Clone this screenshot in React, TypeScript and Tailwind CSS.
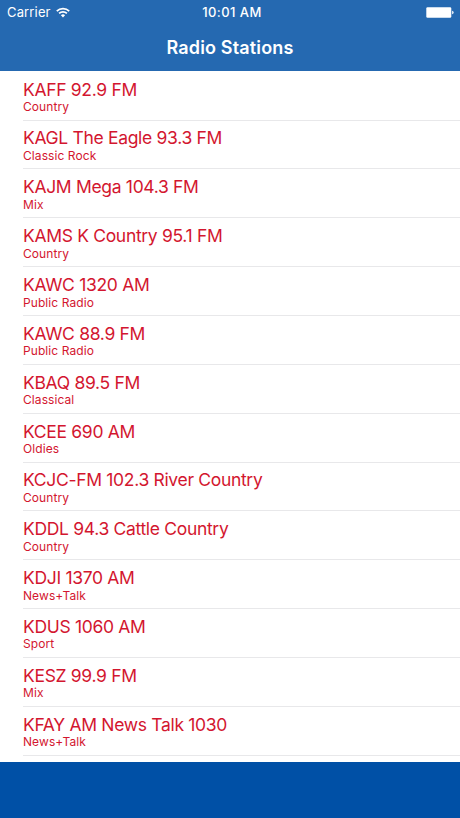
import React from 'react';

interface Station {
    name: string;
    genre: string;
}

const stations: Station[] = [
    { name: 'KAFF 92.9 FM', genre: 'Country' },
    { name: 'KAGL The Eagle 93.3 FM', genre: 'Classic Rock' },
    { name: 'KAJM Mega 104.3 FM', genre: 'Mix' },
    { name: 'KAMS K Country 95.1 FM', genre: 'Country' },
    { name: 'KAWC 1320 AM', genre: 'Public Radio' },
    { name: 'KAWC 88.9 FM', genre: 'Public Radio' },
    { name: 'KBAQ 89.5 FM', genre: 'Classical' },
    { name: 'KCEE 690 AM', genre: 'Oldies' },
    { name: 'KCJC-FM 102.3 River Country', genre: 'Country' },
    { name: 'KDDL 94.3 Cattle Country', genre: 'Country' },
    { name: 'KDJI 1370 AM', genre: 'News+Talk' },
    { name: 'KDUS 1060 AM', genre: 'Sport' },
    { name: 'KESZ 99.9 FM', genre: 'Mix' },
    { name: 'KFAY AM News Talk 1030', genre: 'News+Talk' },
];

const WifiIcon: React.FC = () => (
    <svg width="14" height="11" viewBox="0 0 14 11" fill="none" stroke="white" strokeWidth="1.7">
        <path d="M0.8 4.1a8.8 8.8 0 0 1 12.4 0" />
        <path d="M3.1 6.4a5.5 5.5 0 0 1 7.8 0" />
        <path d="M7 10.4L4.9 8.2a3 3 0 0 1 4.2 0z" fill="white" stroke="none" />
    </svg>
);

const BatteryIcon: React.FC = () => (
    <svg width="28" height="11" viewBox="0 0 28 11" fill="white">
        <rect x="0.3" y="0.2" width="25" height="10.6" rx="1.2" />
        <path d="M26.2 3.7c1.9 0.5 1.9 3.1 0 3.6z" />
    </svg>
);

const StatusBar: React.FC = () => (
    <div className="grid h-6 grid-cols-3 items-center pl-[7px] pr-[6px] text-[13px] leading-none">
        <div className="flex items-center gap-[5px]">
            <span className="tracking-[0.15px]">Carrier</span>
            <WifiIcon />
        </div>
        <span className="pl-[3px] text-center font-medium tracking-[0.45px]">10:01 AM</span>
        <div className="flex justify-end">
            <BatteryIcon />
        </div>
    </div>
);

const StationRow: React.FC<{ station: Station }> = ({ station }) => (
    <li className="h-[48.85px] pl-[23px]">
        <div className="flex h-full flex-col border-b border-[#e8e8ea] pt-[6.8px]">
            <span className="text-[17.5px] leading-[21.6px] tracking-[-0.32px]">{station.name}</span>
            <span className="text-[12px] leading-[14px] tracking-[0.08px]">{station.genre}</span>
        </div>
    </li>
);

export default function App() {
    return (
        <div className="flex h-[818px] w-[460px] flex-col overflow-hidden bg-white font-['Inter',sans-serif]">
            <header className="h-[71px] shrink-0 bg-[#2569b1] text-white">
                <StatusBar />
                <h1 className="pt-3 text-center text-[18px] leading-6 font-semibold tracking-[0.15px]">Radio Stations</h1>
            </header>
            <ul className="min-h-0 flex-1 overflow-hidden pt-[0.8px] text-[#d3162f]">
                {stations.map((station) => (
                    <StationRow key={station.name} station={station} />
                ))}
            </ul>
            <footer className="h-14 shrink-0 bg-[#0050a6]" />
        </div>
    );
}
